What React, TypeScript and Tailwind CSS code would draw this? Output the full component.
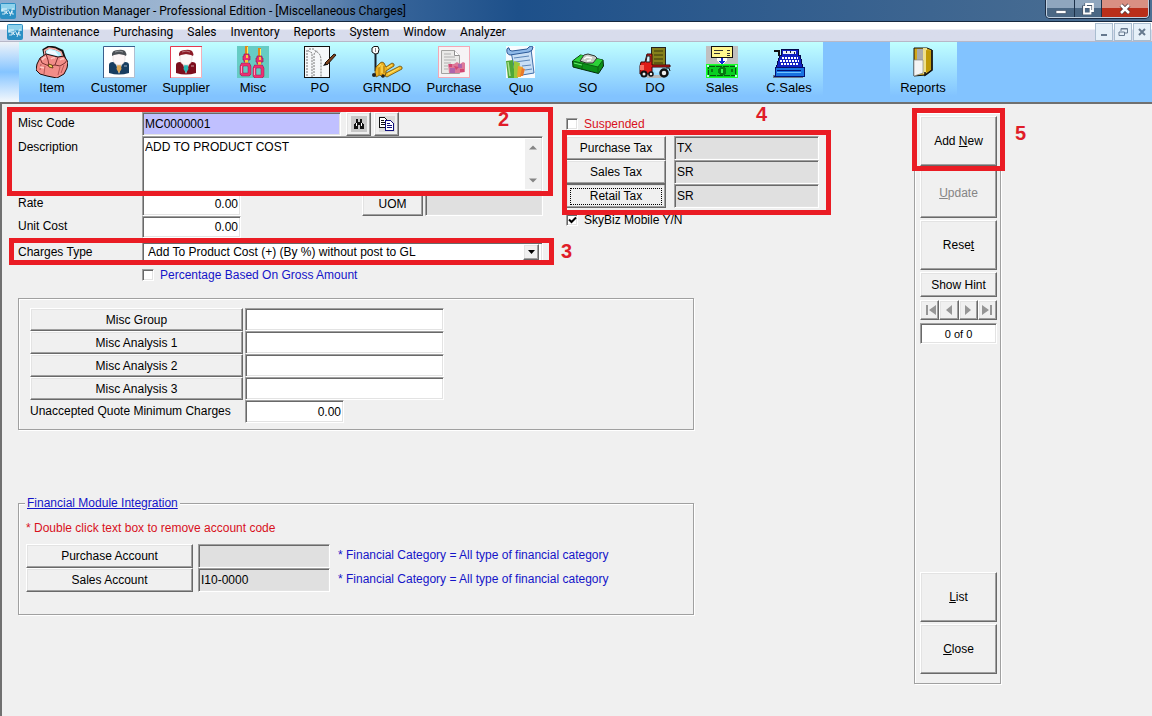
import React, { useState } from "react";

const raised =
    "border border-t-white border-l-white border-r-[#696969] border-b-[#696969] bg-[#f0f0f0] shadow-[inset_-1px_-1px_0_#a0a0a0,inset_1px_1px_0_#e3e3e3]";
const sunken =
    "rounded-none border border-t-[#a0a0a0] border-l-[#a0a0a0] border-r-white border-b-white shadow-[inset_1px_1px_0_#696969,inset_-1px_-1px_0_#e3e3e3] outline-none";
const etched = "border border-[#a0a0a0] shadow-[1px_1px_0_#fff,inset_1px_1px_0_#fff]";

/* ---------- Toolbar icons ---------- */

const ItemIcon = () => (
    <svg width="32" height="32" viewBox="0 0 32 32">
        <path d="M9 9 8 4l5-3 6 1 7 3 3 9" fill="none" stroke="#111" strokeWidth="3" />
        <path d="M9 9 8.500 4.500 13 2l6 1 6 3 3 8" fill="none" stroke="#f9a8a2" strokeWidth="1.500" />
        <path d="m10 7 3-3 6 1 4 5z" fill="#f4fbff" />
        <path d="m4 12 6-4 12 3 6-1 4 6-1 6-3 6-7 4-10-2-7-2-4-4 1-6z" fill="#f28d88" stroke="#1c0a0a" />
        <path d="m4 12 2 5 7 3 6-1 5 1 5-3 2-3M10 8l2 6 1 5M22 11l-3 8" fill="none" stroke="#7d3030" />
        <path d="m5 18-1 6M9 20l-1 8M24 21l-2 8M28 19l-3 8" fill="none" stroke="#b85656" />
        <path d="M6 14q2-3 4-3M15 13q2-2 4-1M24 14q2-2 4-1M4 21l4 1" fill="none" stroke="#ffc9c2" strokeWidth="1.500" />
        <path d="m12 18 4 1 1 3-4-1z" fill="#f7d45a" stroke="#4b300a" strokeWidth=".8" />
    </svg>
);

const Person = ({ frame, hair, suit, tie }: { frame: string; hair: string; suit: string; tie: string }) => (
    <svg width="32" height="32" viewBox="0 0 32 32">
        <rect width="32" height="32" fill="#fff" />
        <path d="M.5 32V.5H32" fill="none" stroke={frame} />
        <path d="M31.500 1v30.500H1" fill="none" stroke={frame} strokeOpacity=".4" />
        <path d="M6 27v-8q0-3 4-3h12q4 0 4 3v8q-10 3-20 0" fill={suit} />
        <path d="M12 15h8l-4 13z" fill="#fff" />
        <path d="m14.500 18 1.500-1 1.500 1 1 5-2.500 4-2.500-4z" fill={tie} />
        <path d="M10 8h12v6q-1 5-6 5t-6-5z" fill="#fdf6f6" stroke="#e0d4d4" strokeWidth=".6" />
        <path d="M9 10Q8 4 15 4q7-1 8 3 1 1 0 3l-2-1-5-1-5 1z" fill={hair} />
        <path d="M12 6q4-2 8 0" fill="none" stroke="#fff" strokeOpacity=".4" />
        <path d="M21 20h3" stroke="#fff" strokeOpacity=".6" />
    </svg>
);

const MiscIcon = () => (
    <svg width="32" height="32" viewBox="0 0 32 32">
        <rect width="32" height="32" fill="#66ccc4" />
        {[0, 13].map((x) => (
            <g key={x} transform={`translate(${x} ${x ? 2 : 0})`}>
                <path d="M9.500 0v9" stroke="#e08a18" strokeWidth="3" />
                <path d="M10.500 1v7" stroke="#ffee58" />
                <path d="M7 8h5v2h1v4h-2v2H7v-2H6v-4h1z" fill="#e92d73" stroke="#8e2350" strokeWidth=".7" />
                <path d="M9 9h2v3H9zM8 14h3v3H8z" fill="#f8c838" />
                <path d="M5.500 18.500h6l1 2v7l-1 1h-6l-1-1v-7z" fill="none" stroke="#8e2350" strokeWidth="3.500" />
                <path d="M5.500 18.500h6l1 2v7l-1 1h-6l-1-1v-7z" fill="none" stroke="#ef2f72" strokeWidth="2.500" />
                <path d="M4.500 20v7" stroke="#ff9dbd" />
            </g>
        ))}
    </svg>
);

const PoIcon = () => (
    <svg width="34" height="32" viewBox="0 0 34 32">
        <rect x="1.500" y=".5" width="25" height="31" fill="#f6f8fa" stroke="#111" />
        <path d="M4 30V4l5 3v24M6 3h5q2 3 3 3 4 2 4 9v16M11 30V10q0-5 4-5" fill="none" stroke="#777" strokeDasharray="2 1" />
        <path d="m22 17 9-9 2 1-9 10z" fill="#7b421c" stroke="#26150a" />
        <path d="m20 20 2-3 2 2z" fill="#111" />
    </svg>
);

const GrndoIcon = () => (
    <svg width="32" height="32" viewBox="0 0 32 32">
        <path d="M1 2 3 .5h4l1 3-1 4-3 .5-3-2z" fill="#fff" stroke="#111" />
        <path d="M4.500 2v4" stroke="#888" />
        <path d="M4.500 8v17" stroke="#16202a" strokeWidth="2" />
        <path d="m4 26 1-5 4-4q2-2 4 0l2 4 6-4 2 1v2l-8 5v4l-4 2-2-2-4 2z" fill="#edb020" stroke="#6a4c08" strokeWidth=".8" />
        <path d="m15 27 14-7 2 1v2l-15 8-2-1z" fill="#f3bd2c" stroke="#6a4c08" strokeWidth=".8" />
        <path d="m7 22 3-4M11 19v8M16 22l5-3M17 28l11-6" stroke="#ffe66a" />
        <path d="M8 21v8M13 20v7" stroke="#a87a10" />
        <circle cx="3" cy="29" r="2" fill="#222" />
        <circle cx="12" cy="30" r="1.800" fill="#222" />
    </svg>
);

const PurchaseIcon = () => (
    <svg width="32" height="32" viewBox="0 0 32 32">
        <rect x=".5" y=".5" width="31" height="31" fill="#f6f3f5" stroke="#f3a8b6" />
        <path d="M3.500 4.500h13l5 5v18h-18z" fill="#eaeae8" stroke="#a2a2a0" />
        <path d="M16.500 4.500v5h5" fill="#fff" stroke="#8f8f8f" />
        <path d="M6 8h7M6 11h11M6 14h12M6 17h7M6 20h4M6 23h4" stroke="#b0b0b0" />
        <path d="M10 18h6l3-2 3 2 3-2 2 1v9q-9 2-16 1z" fill="#dd7898" />
        <path d="M12 22h5v5h-5zM20 18h4v4h-4z" fill="#b064ac" />
        <path d="m16 20 5 1-3 3zM22 23h4v3h-4zM11 18h3v3h-3z" fill="#d24672" />
    </svg>
);

const QuoIcon = () => (
    <svg width="32" height="32" viewBox="0 0 32 32">
        <rect x="1" width="29" height="32" fill="#f8fbfe" />
        <path d="m6 6 20-3 3 24-18 3z" fill="#c9dff5" stroke="#3f6ea9" />
        <path d="M2 3q-1 5 3 6l19-3q4-1 4-5-2-2-4 0l-2 2L7 5Q4 5 4 2 3 1 2 3z" fill="#8fb9e8" stroke="#2c5a98" />
        <path d="m9 12 15-2M10 16l15-2M17 20l9-1M20 24l7-1" stroke="#5c86b8" />
        <path d="m1 15 7-1 2 18H3z" fill="#4fa738" />
        <path d="m3 16 2 14" stroke="#a8e08a" strokeWidth="1.500" />
        <path d="m9 15 6 2-2 15H9z" fill="#9cc93b" />
        <path d="m13 20 5 1-2 10h-4z" fill="#f0a42c" />
        <path d="m17 22 3 1-2 7h-3z" fill="#e8792c" />
    </svg>
);

const SoIcon = () => (
    <svg width="32" height="32" viewBox="0 0 32 32">
        <path d="m.5 15 8-6L31 14l.5 6-5 7.500L1 21z" fill="#0c8f18" stroke="#04290a" />
        <path d="m1 15 8-6 22 5-5 7z" fill="#2cd238" />
        <path d="m1 15 25 6 5-7M26 21v6M10 18v6" fill="none" stroke="#086410" />
        <path d="m2 17 8 2" stroke="#6cf074" />
        <path d="m8 15 4-6 4-1 7 2 2 2-4 5h-7z" fill="#c8cbc4" stroke="#2e332e" />
        <path d="m12 13 3-2 5 1M15 15l4-1" fill="none" stroke="#fff" strokeWidth="1.500" />
    </svg>
);

const DoIcon = () => (
    <svg width="32" height="32" viewBox="0 0 32 32">
        <path d="M8 29h15v3H8z" fill="#b8b8b8" />
        <path d="m14 22 9-1 1 4-7 2z" fill="#b9e6ff" />
        <rect x="12.500" y="1.500" width="14" height="19" fill="#85801b" stroke="#222" />
        <path d="M15 5h9M15 9h9M15 13h9M15 17h9" stroke="#39370a" />
        <path d="M6 16 8 8h5v11h18v2H13v7H1v-8l1-4z" fill="#df1c18" stroke="#3b0505" />
        <path d="m8 10-1 6h4v-6z" fill="#d4f4ff" stroke="#222" />
        <path d="M1 19h4v5H1z" fill="#f76f62" />
        <circle cx="5" cy="28" r="2.500" fill="#eee" stroke="#111" strokeWidth="2" />
        <circle cx="12" cy="28" r="2" fill="#eee" stroke="#111" strokeWidth="1.500" />
        <circle cx="25" cy="27" r="3.500" fill="#eee" stroke="#111" strokeWidth="2.500" />
        <path d="M27 22h3l1 3" fill="none" stroke="#111" />
    </svg>
);

const SalesIcon = () => (
    <svg width="32" height="32" viewBox="0 0 32 32" shapeRendering="crispEdges">
        <rect width="32" height="18" fill="#c0c0c0" />
        <rect x="5.500" y=".5" width="21" height="11" fill="#fff68e" stroke="#111" />
        <path d="M8 4.500h9M8 7.500h6M21 4.500h3M21 7.500h3M21 9.500h3" stroke="#333" />
        <path d="M11 12h10v3l-5 4-5-4z" fill="#fff" />
        <path d="M15 12h2v3h3l-4 3-4-3h3z" fill="#1025d8" />
        <rect x=".5" y="18.500" width="31" height="13" fill="#08ce20" stroke="#18ff28" />
        <rect x="2.500" y="20.500" width="27" height="9" fill="none" stroke="#05540c" strokeDasharray="6 1" />
        <path d="M14 21h4l2 2v4l-2 2h-4l-2-2v-4z" fill="#077611" />
        <path d="M5 23h2v3H5zM25 23h2v3h-2z" fill="#077611" />
        <path d="M1 19h2v2H1zM29 19h2v2h-2zM1 29h2v2H1zM29 29h2v2h-2z" fill="#b8ffe0" />
        <path d="M15 23h2v4h-2z" fill="#3bff52" />
    </svg>
);

const CSalesIcon = () => (
    <svg width="32" height="32" viewBox="0 0 32 32" shapeRendering="crispEdges">
        <path d="M0 29h30v3H0z" fill="#6a7a86" />
        <path d="M1 5h5v5" fill="none" stroke="#111" strokeWidth="2" />
        <path d="M8 3h17v6h2l3 13H3L7 9h1z" fill="#101fc2" stroke="#030849" />
        <path d="M10 5h13v3H10z" fill="#e8eef8" />
        <path d="M13 5v2M17 5v2M21 6v2" stroke="#223" />
        <path d="M9 12h16M7 15h19M8 18h18" stroke="#fff" strokeWidth="2" strokeDasharray="2 1" />
        <path d="M3 21h28v9H2z" fill="#1872e0" stroke="#031070" />
        <path d="M4 26h24" stroke="#6fc4ff" />
        <path d="M4 24h24" stroke="#031070" />
    </svg>
);

const ReportsIcon = () => (
    <svg width="22" height="32" viewBox="0 0 22 32">
        <path d="M2 2h13l5 2v20l-6 5-12 1z" fill="#d2a719" stroke="#111" />
        <path d="M5 3h7v12H5z" fill="#aaa" />
        <path d="M11 2h4v25l-4 1z" fill="#efe08c" />
        <path d="M2 14h9v13l-9 3z" fill="#f4f4f4" stroke="#888" strokeWidth=".7" />
        <path d="m14 4 5 1v18l-5 4z" fill="#c09a08" />
        <path d="M20 4v20l-7 5v-3" fill="none" stroke="#111" strokeWidth="1.500" />
    </svg>
);

const AppLogo = () => (
    <svg width="16" height="16" viewBox="0 0 16 16">
        <rect width="16" height="16" rx="2" fill="#2b8fc4" />
        <path d="M1 1h14v6Q8 5 1 9z" fill="#8fd2ec" />
        <path d="M5 6H2v2h3v3H2M6 5v6M9 7 6 9l2 2M9 8l1 3 2-3-2 5M14 6h-2v5h2" fill="none" stroke="#f2fbff" strokeWidth=".8" />
    </svg>
);

const BinocularsIcon = () => (
    <svg width="16" height="16" viewBox="0 0 16 16" shapeRendering="crispEdges">
        <rect width="16" height="16" fill="#c8c8c8" />
        <path d="M5 3h2v3h2V3h2v3l2 3v4h-4V9H7v4H3V9l2-3z" fill="#111" />
        <path d="M5.500 7v3M10.500 7v3" stroke="#fff" />
    </svg>
);

const CopyIcon = () => (
    <svg width="16" height="16" viewBox="0 0 16 16" shapeRendering="crispEdges">
        <rect width="16" height="16" fill="#dcdcdc" />
        <path d="M.5 1.500h5l3 3v7h-8z" fill="#fff" stroke="#111" />
        <path d="M2 4.500h3M2 6.500h4M2 8.500h4" stroke="#111" />
        <path d="M6.500 4.500h5l3 3v7h-8z" fill="#fff" stroke="#10107c" />
        <path d="M8 7.500h3M8 9.500h5M8 11.500h5" stroke="#10107c" />
    </svg>
);

const tools = [
    { label: "Item", icon: <ItemIcon /> },
    { label: "Customer", icon: <Person frame="#39608d" hair="#4a4f54" suit="#173d60" tie="#dca653" /> },
    { label: "Supplier", icon: <Person frame="#e23a50" hair="#8b1a26" suit="#7c0d1c" tie="#28b7b3" /> },
    { label: "Misc", icon: <MiscIcon /> },
    { label: "PO", icon: <PoIcon /> },
    { label: "GRNDO", icon: <GrndoIcon /> },
    { label: "Purchase", icon: <PurchaseIcon /> },
    { label: "Quo", icon: <QuoIcon /> },
    { label: "SO", icon: <SoIcon /> },
    { label: "DO", icon: <DoIcon /> },
    { label: "Sales", icon: <SalesIcon /> },
    { label: "C.Sales", icon: <CSalesIcon /> },
];

const menus = ["Maintenance", "Purchasing", "Sales", "Inventory", "Reports", "System", "Window", "Analyzer"];

/* ---------- Small building blocks ---------- */

const ToolButton = ({ label, icon }: { label: string; icon: React.ReactNode }) => (
    <button className="flex h-full w-[67px] shrink-0 flex-col items-center bg-linear-to-b from-[#c0ffff] to-[#82c3ff] to-90% pt-1 pr-px text-[13px] leading-4">
        <span className="flex h-8 items-center">{icon}</span>
        <span className="mt-0.5">{label}</span>
    </button>
);

const Button = ({ className = "", children, ...rest }: React.ButtonHTMLAttributes<HTMLButtonElement>) => (
    <button className={`${raised} flex shrink-0 items-center justify-center ${className}`} {...rest}>
        {children}
    </button>
);

const CheckBox = ({ id, label, color, defaultChecked = false }: { id: string; label: string; color: string; defaultChecked?: boolean }) => {
    const [checked, setChecked] = useState(defaultChecked);
    return (
        <div className="flex items-center gap-1.5">
            <span className="relative flex size-3">
                <input
                    id={id}
                    type="checkbox"
                    checked={checked}
                    onChange={(e) => setChecked(e.target.checked)}
                    className={`${sunken} size-3 appearance-none bg-white`}
                />
                {checked && (
                    <svg className="pointer-events-none absolute inset-0" width="12" height="12" viewBox="0 0 12 12">
                        <path d="m3 5.500 2.500 2.500L10 3.500" fill="none" stroke="#000" strokeWidth="2" />
                    </svg>
                )}
            </span>
            <label htmlFor={id} className={color}>{label}</label>
        </div>
    );
};

// Red frame drawn over a part of the form, with its step number
const Callout = ({ step, frame, number }: { step: number; frame: string; number: string }) => (
    <>
        <div className={`pointer-events-none absolute z-10 border-[5px] border-[#ea1c24] ${frame}`} />
        <span className={`absolute z-10 text-xl leading-5 font-bold text-[#e01c28] ${number}`}>{step}</span>
    </>
);

const TitleBar = () => (
    <header className="flex h-[22px] items-start border-b border-[#16283e] bg-linear-to-r from-[#7fa2c8] via-[#1d508a] via-45% to-[#4d7093]">
        <div className="flex h-full flex-1 items-center gap-1.5 bg-linear-to-r from-white/10 via-white/45 via-20% to-transparent to-38%">
            <AppLogo />
            <h1 className="text-xs text-black">MyDistribution Manager - Professional Edition - [Miscellaneous Charges]</h1>
        </div>
        <div className="mr-[3px] flex h-[18px] overflow-hidden rounded-b border border-t-0 border-[#c0d0e0] shadow-[0_0_0_1px_#1c2c44]">
            <button aria-label="Minimize" className="flex w-7 items-center justify-center border-r border-[#1c3048] bg-linear-to-b from-[#8fa6be] from-45% to-[#4a6784] to-50%">
                <svg width="12" height="12" viewBox="0 0 12 12"><path d="M1 7.500h10v3H1z" fill="#fff" stroke="#46566a" strokeWidth=".7" /></svg>
            </button>
            <button aria-label="Restore" className="flex w-[27px] items-center justify-center border-r border-[#1c3048] bg-linear-to-b from-[#8fa6be] from-45% to-[#4a6784] to-50%">
                <svg width="12" height="12" viewBox="0 0 12 12" fill="none">
                    <path d="M4 3V1h7v7H9M1.500 4h7v7h-7z" stroke="#46566a" strokeWidth="3" />
                    <path d="M4 3V1h7v7H9M2 4h6.500v6.500H2z" stroke="#fff" strokeWidth="1.800" />
                </svg>
            </button>
            <button aria-label="Close window" className="flex w-[46px] items-center justify-center bg-linear-to-b from-[#d99082] from-45% to-[#b92f1a] to-50%">
                <svg width="12" height="12" viewBox="0 0 12 12">
                    <path d="m2 2 8 8M10 2l-8 8" stroke="#4d3436" strokeWidth="4" />
                    <path d="m2 2 8 8M10 2l-8 8" stroke="#fff" strokeWidth="2.500" />
                </svg>
            </button>
        </div>
    </header>
);

const childButton = "flex h-[18px] w-[18px] items-center justify-center border border-[#a9bdd0] bg-[#e6f0f9]";

const MenuBar = () => (
    <nav className="flex h-5 items-center justify-between border-b border-[#b8b8c8] bg-linear-to-b from-white from-35% to-[#d8dcec] to-45% pl-[7px] text-xs">
        <div className="flex items-center gap-[7px]">
            <AppLogo />
            <ul className="flex gap-3.5">
                {menus.map((menu) => (
                    <li key={menu}><a href="#">{menu}</a></li>
                ))}
            </ul>
        </div>
        <div className="flex gap-px pr-px">
            <button aria-label="Minimize form" className={childButton}>
                <svg width="10" height="10" viewBox="0 0 10 10"><path d="M2 8h6" stroke="#66798e" strokeWidth="2" /></svg>
            </button>
            <button aria-label="Restore form" className={childButton}>
                <svg width="10" height="10" viewBox="0 0 10 10" fill="none" stroke="#66798e"><path d="M3 4V1.500h6.500V6H7M1 5h5.500v3.500H1zM3 2h6" /></svg>
            </button>
            <button aria-label="Close form" className={childButton}>
                <svg width="10" height="10" viewBox="0 0 10 10"><path d="m2 2 6 6M8 2 2 8" stroke="#66798e" strokeWidth="2" /></svg>
            </button>
        </div>
    </nav>
);

const ToolBar = () => (
    <div className="flex h-[60px] shrink-0 overflow-hidden bg-[#82c3ff]">
        <div className="w-[19px] shrink-0 bg-linear-to-b from-[#eef3f8] via-[#84c4ff] to-[#f4f8fc]" />
        {tools.map((tool) => (
            <ToolButton key={tool.label} label={tool.label} icon={tool.icon} />
        ))}
        <div className="w-[67px]" />
        <ToolButton label="Reports" icon={<ReportsIcon />} />
    </div>
);

const taxes = [
    { label: "Purchase Tax", value: "TX" },
    { label: "Sales Tax", value: "SR" },
    { label: "Retail Tax", value: "SR" },
];

const TaxPanel = () => (
    <section className="w-[253px] shrink-0">
        <div className="flex h-6 items-center">
            <CheckBox id="suspended" label="Suspended" color="text-[#d8101c]" />
        </div>
        <div className="relative">
            {taxes.map((tax) => (
                <div key={tax.label} className="flex h-6 gap-2">
                    <Button className={tax.label === "Retail Tax" ? "w-[100px] outline-1 -outline-offset-1 outline-[#696969]" : "w-[100px]"}>
                        {tax.label === "Retail Tax" ? (
                            <span className="flex h-[17px] w-[92px] items-center justify-center border border-dotted border-black">{tax.label}</span>
                        ) : (
                            tax.label
                        )}
                    </Button>
                    <input aria-label={tax.label} defaultValue={tax.value} readOnly className={`${sunken} w-full min-w-0 bg-[#e0e0e0] px-0.5`} />
                </div>
            ))}
            <Callout step={4} frame="-top-1.5 -right-3 -bottom-[7px] -left-1" number="-top-8 left-[190px]" />
        </div>
        <div className="flex h-6 items-center">
            <CheckBox id="mobile" label="SkyBiz Mobile Y/N" color="text-black" defaultChecked />
        </div>
    </section>
);

const ChargeForm = () => (
    <section className="w-[525px] shrink-0">
        <div className="relative">
            <div className="flex h-6">
                <label htmlFor="code" className="w-[124px] shrink-0 leading-[22px]">Misc Code</label>
                <input id="code" defaultValue="MC0000001" className={`${sunken} w-[199px] bg-[#c0c0ff] px-0.5`} />
                <Button aria-label="Find" className="ml-[5px] w-[25px]"><BinocularsIcon /></Button>
                <Button aria-label="Copy" className="ml-[3px] w-[25px]"><CopyIcon /></Button>
            </div>
            <div className="flex h-14">
                <label htmlFor="description" className="w-[124px] shrink-0 leading-[22px]">Description</label>
                <div className={`${sunken} flex flex-1 bg-white p-0.5 pr-px`}>
                    <textarea id="description" defaultValue="ADD TO PRODUCT COST" className="flex-1 resize-none leading-4 outline-none" />
                    <div className="flex w-4 flex-col items-center justify-between bg-[#f0f0f0] py-1.5">
                        <svg width="8" height="5" viewBox="0 0 8 5"><path d="m0 4.500 4-4 4 4z" fill="#858585" /></svg>
                        <svg width="8" height="5" viewBox="0 0 8 5"><path d="m0 .5 4 4 4-4z" fill="#858585" /></svg>
                    </div>
                </div>
            </div>
            <Callout step={2} frame="-top-[5px] -right-2.5 -bottom-1 -left-[11px]" number="-top-[3px] left-[480px]" />
        </div>
        <div className="flex h-6 items-stretch">
            <label htmlFor="rate" className="w-[124px] shrink-0 leading-[22px]">Rate</label>
            <input id="rate" defaultValue="0.00" className={`${sunken} w-[99px] bg-white px-0.5 text-right`} />
            <Button className="ml-[121px] w-[61px]">UOM</Button>
            <input aria-label="UOM" readOnly className={`${sunken} ml-0.5 min-w-0 flex-1 bg-[#e0e0e0] px-0.5`} />
        </div>
        <div className="flex h-[22px]">
            <label htmlFor="cost" className="w-[124px] shrink-0 leading-5">Unit Cost</label>
            <input id="cost" defaultValue="0.00" className={`${sunken} w-[99px] bg-white px-0.5 text-right`} />
        </div>
        <div className="relative mt-1 flex h-5">
            <label htmlFor="type" className="w-[124px] shrink-0 leading-5">Charges Type</label>
            <div className="relative flex flex-1">
                <select id="type" className={`${sunken} w-full appearance-none bg-white px-[5px]`}>
                    <option>Add To Product Cost (+) (By %) without post to GL</option>
                </select>
                <span className={`${raised} pointer-events-none absolute inset-y-0.5 right-1 flex w-4 items-center justify-center`}>
                    <svg width="7" height="4" viewBox="0 0 7 4"><path d="M0 0h7L3.500 4z" /></svg>
                </span>
            </div>
            <Callout step={3} frame="-top-1 -right-[11px] -bottom-[3px] -left-[9px]" number="-top-px left-[543px]" />
        </div>
        <div className="mt-1 flex h-[18px] items-center pl-[124px]">
            <CheckBox id="gross" label="Percentage Based On Gross Amount" color="text-[#1414c8]" />
        </div>
    </section>
);

const groups = ["Misc Group", "Misc Analysis 1", "Misc Analysis 2", "Misc Analysis 3"];

const GroupPanel = () => (
    <section className={`${etched} mt-3.5 max-w-[676px] px-[11px] pt-[9px] pb-1.5`}>
        {groups.map((group) => (
            <div key={group} className="flex h-[23px] gap-0.5">
                <Button className="w-[213px]">{group}</Button>
                <input aria-label={group} className={`${sunken} w-[199px] bg-white px-0.5`} />
            </div>
        ))}
        <div className="flex h-[23px] gap-0.5">
            <label htmlFor="minimum" className="w-[213px] leading-[22px] whitespace-nowrap">Unaccepted Quote Minimum Charges</label>
            <input id="minimum" defaultValue="0.00" className={`${sunken} w-[99px] bg-white px-0.5 text-right`} />
        </div>
    </section>
);

const accounts = [
    { label: "Purchase Account", value: "" },
    { label: "Sales Account", value: "I10-0000" },
];

const FinancialPanel = () => (
    <fieldset className={`${etched} mt-[65px] max-w-[676px] px-[7px] pb-[22px]`}>
        <legend className="-ml-px bg-[#f0f0f0] px-0.5 leading-4 text-[#1414c8] underline">Financial Module Integration</legend>
        <p className="mt-[9px] mb-2 leading-4 text-[#d8101c]">* Double click text box to remove account code</p>
        {accounts.map((account) => (
            <div key={account.label} className="flex h-6">
                <Button className="w-[167px]">{account.label}</Button>
                <input aria-label={account.label} defaultValue={account.value} readOnly className={`${sunken} ml-[5px] w-[132px] bg-[#e0e0e0] px-0.5`} />
                <span className="ml-2 leading-[22px] text-[#1414c8]">* Financial Category = All type of financial category</span>
            </div>
        ))}
    </fieldset>
);

const navPaths = [
    { label: "First", d: "M2 1h2v10H2zM12 1v10L5 6z" },
    { label: "Previous", d: "M9 1v10L3 6z" },
    { label: "Next", d: "M3 1v10l6-5z" },
    { label: "Last", d: "M9 1h2v10H9zM1 1v10l7-5z" },
];

const ActionPanel = () => (
    <aside className={`${etched} flex w-[87px] shrink-0 flex-col gap-0.5 pt-[3px] pr-[3px] pb-[9px] pl-[5px]`}>
        <div className="relative">
            <Button className="h-[50px] w-full"><span>Add <u>N</u>ew</span></Button>
            <Callout step={5} frame="-top-2 -right-2 -bottom-[5px] -left-2" number="top-[7px] left-[95px]" />
        </div>
        <Button className="h-[50px] text-[#858585]"><span><u>U</u>pdate</span></Button>
        <Button className="h-[50px]"><span>Rese<u>t</u></span></Button>
        <Button className="h-[25px]">Show Hint</Button>
        <div className="mt-px flex h-5">
            {navPaths.map((nav) => (
                <Button key={nav.label} aria-label={nav.label} className="w-1/4">
                    <svg width="12" height="12" viewBox="0 0 12 12"><path d={nav.d} fill="#969696" /></svg>
                </Button>
            ))}
        </div>
        <input aria-label="Record" defaultValue="0 of 0" readOnly className={`${sunken} mt-px h-[21px] w-full bg-white text-center text-[11px]`} />
        <Button className="mt-[226px] h-[50px]"><span><u>L</u>ist</span></Button>
        <Button className="h-[50px]"><span><u>C</u>lose</span></Button>
    </aside>
);

const App: React.FC = () => {
    return (
        <div className="flex min-h-screen flex-col overflow-hidden bg-[#f0f0f0] text-black">
            <div className="font-[Roboto,sans-serif]">
                <TitleBar />
                <MenuBar />
            </div>
            <div className="flex flex-1 flex-col font-['Liberation_Sans',Arial,sans-serif] text-xs">
                <ToolBar />
                <main className="flex flex-1 items-start justify-between border-t-2 border-l-2 border-[#707070] pt-2 pr-[151px] pl-4">
                    <div className="min-w-0 flex-1">
                        <div className="flex gap-[23px]">
                            <ChargeForm />
                            <TaxPanel />
                        </div>
                        <GroupPanel />
                        <FinancialPanel />
                    </div>
                    <ActionPanel />
                </main>
            </div>
        </div>
    );
};

export default App;
